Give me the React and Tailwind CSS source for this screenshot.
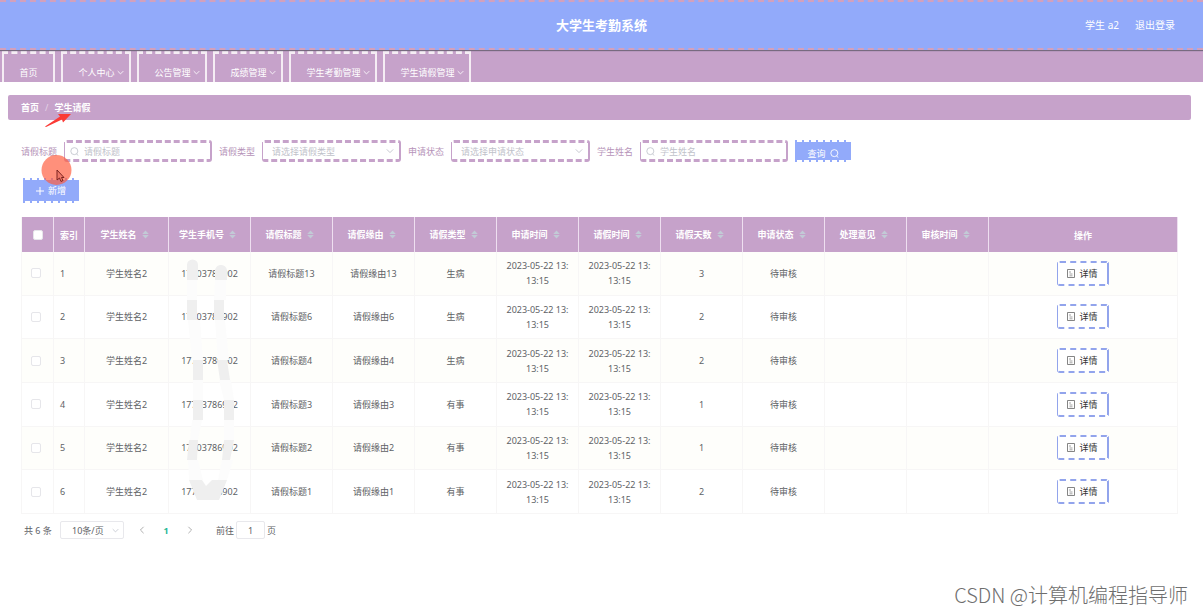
import React from "react";

const NAV = [
  { label: "首页", style: "w-[53px]" },
  { label: "个人中心", style: "w-[70px] pl-[10px]", menu: true },
  { label: "公告管理", style: "w-[70px] pl-[10px]", menu: true },
  { label: "成绩管理", style: "w-[70px] pl-[10px]", menu: true },
  { label: "学生考勤管理", style: "w-[88px] pl-[10px]", menu: true },
  { label: "学生请假管理", style: "w-[88px] pl-[10px]", menu: true },
];

const COLUMNS = [
  "学生手机号",
  "请假标题",
  "请假缘由",
  "请假类型",
  "申请时间",
  "请假时间",
  "请假天数",
  "申请状态",
  "处理意见",
  "审核时间",
];

const ROWS = [
  { phone: "17703786902", n: 13, type: "生病", days: 3 },
  { phone: "17703786902", n: 6, type: "生病", days: 2 },
  { phone: "17703786902", n: 4, type: "生病", days: 2 },
  { phone: "17703786902", n: 3, type: "有事", days: 1 },
  { phone: "17703786902", n: 2, type: "有事", days: 1 },
  { phone: "17703786902", n: 1, type: "有事", days: 2 },
];

const CELL = "h-[43px] border-r border-b border-[#f7f6f6] px-2 text-center";
const HEAD = "h-[35px] border-r border-[#eedff0] p-0 font-bold text-white";
const FIELD =
  "flex h-[22px] items-center rounded-[3px] border-y-3 border-r-2 border-l border-[#c6a2ca] [border-style:dashed_solid] bg-white";
const TOOTHED =
  "flex w-[56px] bg-[repeating-linear-gradient(90deg,#92aafa_0_2px,#fff_2px_7px)] py-[2px] text-white";
const TOOTHED_FACE = "flex flex-1 items-center justify-center gap-1 bg-[#92aafa]";

function Chevron({ className }) {
  return (
    <svg viewBox="0 0 10 10" className={className} fill="none" stroke="currentColor" strokeWidth="1.2">
      <path d="M1 3 5 7 9 3" />
    </svg>
  );
}

function SearchIcon({ className }) {
  return (
    <svg viewBox="0 0 10 10" className={className} fill="none" stroke="currentColor" strokeWidth="1">
      <circle cx="4.8" cy="4.6" r="3.9" />
      <path d="M7.2 7.6 9.3 9.6" />
    </svg>
  );
}

function Sorter() {
  return (
    <svg viewBox="0 0 7 9" className="h-[9px] w-[7px]" fill="#c2cad6">
      <path d="M3.5 0.5 6.8 4H0.2Z M3.5 8.5 0.2 5H6.8Z" />
    </svg>
  );
}

function SortableHead({ name, width }) {
  return (
    <th className={`${HEAD} ${width}`}>
      <div className="flex items-center justify-center gap-[5px] pr-1">
        {name}
        <Sorter />
      </div>
    </th>
  );
}

function TextField({ id, label }) {
  return (
    <div className="flex items-center gap-[7px]">
      <label htmlFor={id} className="text-[#b693b9]">{label}</label>
      <div className={`${FIELD} w-[148px] gap-[5px] px-[5px]`}>
        <SearchIcon className="size-[9px] shrink-0 text-[#c4c7cf]" />
        <input id={id} placeholder={label} className="w-full min-w-0 bg-transparent outline-none placeholder:text-[#bfc2ca]" />
      </div>
    </div>
  );
}

function SelectField({ id, label, prompt }) {
  return (
    <div className="flex items-center gap-[7px]">
      <label htmlFor={id} className="text-[#b693b9]">{label}</label>
      <div className={`${FIELD} w-[139px] pr-[5px] pl-[9px]`}>
        <select id={id} className="w-full min-w-0 appearance-none bg-transparent text-[#bfc2ca] outline-none">
          <option>{prompt}</option>
        </select>
        <Chevron className="size-[8px] shrink-0 text-[#c4c7cf]" />
      </div>
    </div>
  );
}

function Check({ label }) {
  return (
    <input
      type="checkbox"
      aria-label={label}
      className="block size-[10px] appearance-none rounded-[2px] border border-[#e6e6ea] bg-white"
    />
  );
}

function PhoneMask() {
  return (
    <svg viewBox="181 255 60 250" className="pointer-events-none absolute top-[38px] left-[160px] h-[250px] w-[60px]">
      <path
        fill="#fcfcfc"
        d="M187 280H197V300H187Z M215 280H226V300H214Z M188 320H200L203 360H192Z M215 320H225L229 360H218Z M193 380H203V400H193Z M219 380H231L234 400H224Z M192 420H202L198 440H190Z M224 420H234V440H224Z M188 460H198L203 480H189Z M222 460H233L227 480H218Z"
      />
      <path
        fill="#efefef"
        d="M187 265A5 5 0 0 1 198 265V280H187Z M215 280V272A6 6 0 0 1 227 270V280Z M187 300H197V320H187Z M214 300H224V320H214Z M193 360H203V380H193Z M217 360H227L230 380H220Z M193 400H203V420H193Z M224 400H234V420H224Z M189 440H198L197 460H187Z M224 440H234L230 460H222Z M189 480H202L206 486 212 480H227L219 500H197Z"
      />
    </svg>
  );
}

export default function App() {
  return (
    <div className="relative min-h-screen overflow-hidden bg-white font-['Noto_Sans','Noto_Sans_CJK_SC',sans-serif] text-[9px] leading-[15px] text-[#606266]">
      <header className="relative z-10 grid h-[50px] grid-cols-3 items-center border-y-2 border-dashed border-[#d3a0bc] bg-[#92aafa] text-white shadow-[0_1px_1px_#776a80]">
        <h1 className="col-start-2 text-center text-[13px] leading-5 font-bold">大学生考勤系统</h1>
        <div className="flex justify-end gap-4 pr-7 text-[10px]">
          <span>学生 a2</span>
          <a href="#logout">退出登录</a>
        </div>
      </header>

      <nav className="flex h-[32px] gap-[6px] bg-[#c6a2ca] pt-px pl-[2px]">
        {NAV.map((item) => (
          <a
            key={item.label}
            href="#nav"
            className={`${item.style} flex items-end justify-center gap-[2px] border-x-2 border-t-3 border-[#f5edf4] [border-style:dashed_solid_none] pb-[2px] text-white`}
          >
            {item.label}
            {item.menu && <Chevron className="mb-1 size-[7px]" />}
          </a>
        ))}
      </nav>

      <main className="px-2 pt-[13px]">
        <div className="mr-1 flex h-[25px] items-center gap-[6px] rounded-[2px] bg-[#c6a2ca] pl-[13px] font-bold text-white">
          <a href="#home">首页</a>
          <span className="font-normal text-[#e4d4e6]">/</span>
          <span>学生请假</span>
        </div>

        <form className="mt-5 flex gap-[7px] pl-[13px]">
          <TextField id="title" label="请假标题" />
          <SelectField id="type" label="请假类型" prompt="请选择请假类型" />
          <SelectField id="state" label="申请状态" prompt="请选择申请状态" />
          <TextField id="name" label="学生姓名" />
          <button type="button" className={`${TOOTHED} h-[22px]`}>
            <span className={`${TOOTHED_FACE} h-full pt-1`}>
              查询
              <SearchIcon className="size-[9px]" />
            </span>
          </button>
        </form>

        <button type="button" className={`${TOOTHED} mt-4 ml-[15px] h-[25px]`}>
          <span className={`${TOOTHED_FACE} h-full`}>
            <svg viewBox="0 0 8 8" className="size-2" stroke="currentColor"><path d="M4 0V8M0 4H8" /></svg>
            新增
          </span>
        </button>

        <div className="relative mt-[14px] mr-[17px] ml-[13px]">
          <table className="h-[297px] w-full table-fixed border-separate border-spacing-0 border-l border-[#f7f6f6]">
            <thead className="bg-[#c6a2ca]">
              <tr>
                <th className={`${HEAD} w-[32px]`}><div className="flex justify-center"><Check label="全选" /></div></th>
                <th className={`${HEAD} w-[31px] pt-[2px]`}>索引</th>
                <SortableHead name="学生姓名" width="w-[84px]" />
                {COLUMNS.map((name) => (
                  <SortableHead key={name} name={name} width="w-[82px]" />
                ))}
                <th className={`${HEAD} pt-[2px]`}>操作</th>
              </tr>
            </thead>
            <tbody>
              {ROWS.map((row, i) => (
                <tr key={row.n} className="odd:bg-[#fefefb]">
                  <td className="h-[43px] border-r border-b border-[#f7f6f6] pl-[9px]"><Check label={`选择第${i + 1}行`} /></td>
                  <td className="h-[43px] border-r border-b border-[#f7f6f6] pl-[6px]">{i + 1}</td>
                  <td className={CELL}>学生姓名2</td>
                  <td className={CELL}>{row.phone}</td>
                  <td className={CELL}>请假标题{row.n}</td>
                  <td className={CELL}>请假缘由{row.n}</td>
                  <td className={CELL}>{row.type}</td>
                  <td className={CELL}>2023-05-22 13:<br />13:15</td>
                  <td className={CELL}>2023-05-22 13:<br />13:15</td>
                  <td className={CELL}>{row.days}</td>
                  <td className={CELL}>待审核</td>
                  <td className={CELL} />
                  <td className={CELL} />
                  <td className={CELL}>
                    <button type="button" className="mx-auto flex h-[25px] w-[52px] items-center justify-center gap-1 rounded-[3px] border-y-2 border-r-2 border-l border-[#92a4ec] [border-style:dashed_solid] bg-white text-[#333]">
                      <svg viewBox="0 0 8 9" className="h-[9px] w-2" fill="none" stroke="#666" strokeWidth="0.8">
                        <path d="M0.5 0.5H7.5V8.5H0.5Z" />
                        <path d="M2 3H4 M2.500 5H5.500 M2.500 6.800H5.500" strokeWidth="0.6" />
                      </svg>
                      详情
                    </button>
                  </td>
                </tr>
              ))}
            </tbody>
          </table>
          <PhoneMask />
        </div>

        <div className="mt-[7px] ml-4 flex h-[18px] items-center">
          <span className="w-[36px]">共 6 条</span>
          <div className="flex h-[18px] w-[64px] items-center rounded-[2px] border border-[#e8e8ec] pr-1">
            <select aria-label="每页条数" className="w-full appearance-none bg-transparent pl-[11px] outline-none"><option>10条/页</option></select>
            <Chevron className="size-[7px] shrink-0 text-[#c4c7cf]" />
          </div>
          <button type="button" aria-label="上一页" className="ml-[14px]"><Chevron className="size-2 rotate-90 text-[#aaa]" /></button>
          <button type="button" className="mx-4 w-2 font-bold text-[#1fb795]">1</button>
          <button type="button" aria-label="下一页"><Chevron className="size-2 -rotate-90 text-[#aaa]" /></button>
          <label htmlFor="page" className="ml-[22px]">前往</label>
          <input id="page" defaultValue="1" className="mx-[2px] h-[18px] w-[29px] rounded-[2px] border border-[#e8e8ec] text-center outline-none" />
          <span>页</span>
        </div>
      </main>

      <svg viewBox="0 0 50 90" className="pointer-events-none absolute top-[110px] left-[36px] z-20 h-[90px] w-[50px]">
        <path d="M9 16.500 24 6.500 22 4 35 4 27 12.500 26 9.500 10 17Z" fill="#fb3a36" />
        <circle cx="20.500" cy="60" r="15" fill="#ff5b3d" fillOpacity="0.68" />
        <path d="M21 60V70L23.500 68 25 71.500 27 70.500 25.500 67.500H28Z" fill="#ee7868" stroke="#701c18" strokeWidth="0.9" />
      </svg>

      <div className="pointer-events-none absolute right-[15px] bottom-[5px] font-['Noto_Sans_CJK_SC',sans-serif] text-[20px] leading-7 font-light text-[#6e6e6e]">
        CSDN @计算机编程指导师
      </div>
    </div>
  );
}
